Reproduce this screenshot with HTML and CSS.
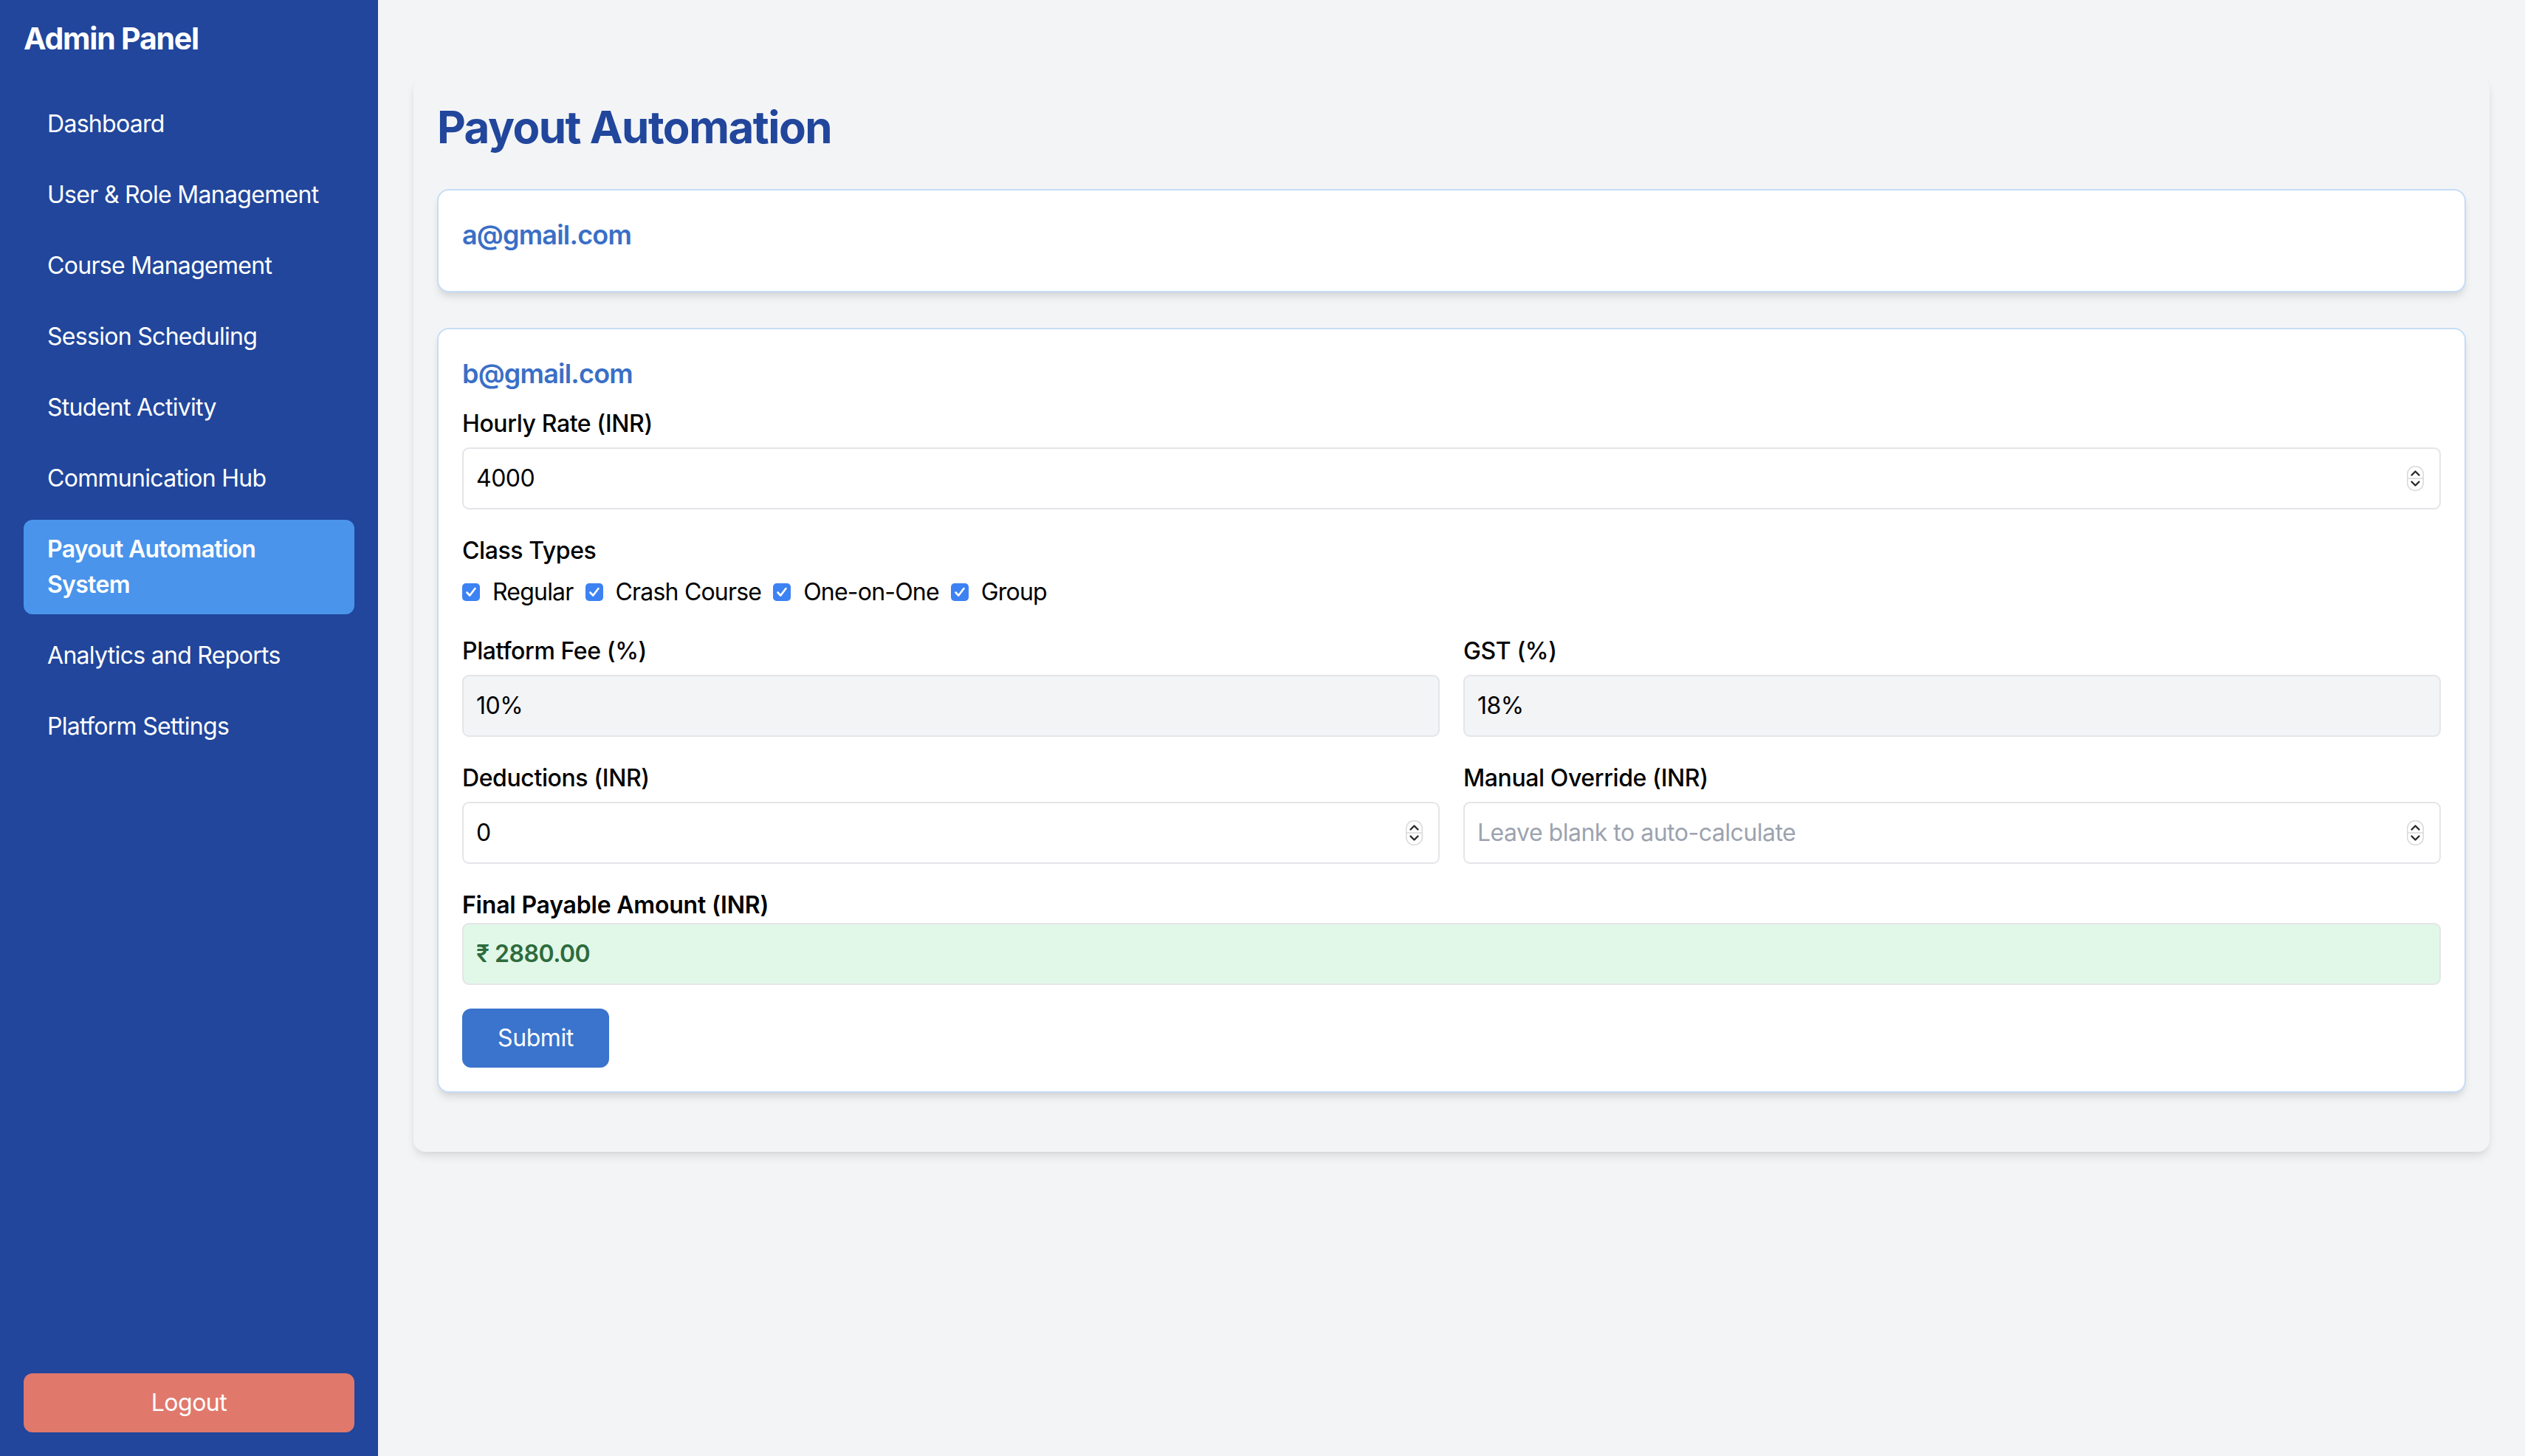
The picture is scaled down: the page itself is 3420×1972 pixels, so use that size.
FILE: index.html
```html
<!DOCTYPE html>
<html lang="en">
<head>
<meta charset="utf-8">
<title>Payout Automation</title>
<link rel="stylesheet" href="styles.css">
</head>
<body>
<div class="layout">
  <aside class="sidebar">
    <div class="brand">Admin Panel</div>
    <nav class="nav">
      <a class="nav-item">Dashboard</a>
      <a class="nav-item">User &amp; Role Management</a>
      <a class="nav-item">Course Management</a>
      <a class="nav-item">Session Scheduling</a>
      <a class="nav-item">Student Activity</a>
      <a class="nav-item">Communication Hub</a>
      <a class="nav-item active">Payout Automation System</a>
      <a class="nav-item">Analytics and Reports</a>
      <a class="nav-item">Platform Settings</a>
    </nav>
    <button class="logout">Logout</button>
  </aside>

  <main class="main">
    <section class="panel">
      <h1 class="page-title">Payout Automation</h1>

      <div class="card">
        <h2 class="card-email">a@gmail.com</h2>
      </div>

      <div class="card">
        <h2 class="card-email">b@gmail.com</h2>

        <div class="field">
          <div class="label">Hourly Rate (INR)</div>
          <div class="input">
            <span>4000</span>
            <svg class="spin" width="23" height="34" viewBox="0 0 23 34"><rect x="0.75" y="0.75" width="21.5" height="32.5" rx="10" fill="#fff" stroke="#d9d9dc" stroke-width="1.5"/><line x1="1" y1="17" x2="22" y2="17" stroke="#d9d9dc" stroke-width="1.5"/><path d="M6.5 12.5 L11.5 7.5 L16.5 12.5" fill="none" stroke="#2b2b2b" stroke-width="2.4" stroke-linecap="round" stroke-linejoin="round"/><path d="M6.5 21.5 L11.5 26.5 L16.5 21.5" fill="none" stroke="#2b2b2b" stroke-width="2.4" stroke-linecap="round" stroke-linejoin="round"/></svg>
          </div>
        </div>

        <div class="field">
          <div class="label">Class Types</div>
          <div class="checks">
            <label class="check"><svg class="box" width="24" height="24" viewBox="0 0 24 24"><rect x="0" y="0" width="24" height="24" rx="5" fill="#3d82f2"/><path d="M6.5 12.5 L10.3 16.5 L17.5 7" fill="none" stroke="#fff" stroke-width="2.6" stroke-linecap="round" stroke-linejoin="round"/></svg>Regular</label>
            <label class="check"><svg class="box" width="24" height="24" viewBox="0 0 24 24"><rect x="0" y="0" width="24" height="24" rx="5" fill="#3d82f2"/><path d="M6.5 12.5 L10.3 16.5 L17.5 7" fill="none" stroke="#fff" stroke-width="2.6" stroke-linecap="round" stroke-linejoin="round"/></svg>Crash Course</label>
            <label class="check"><svg class="box" width="24" height="24" viewBox="0 0 24 24"><rect x="0" y="0" width="24" height="24" rx="5" fill="#3d82f2"/><path d="M6.5 12.5 L10.3 16.5 L17.5 7" fill="none" stroke="#fff" stroke-width="2.6" stroke-linecap="round" stroke-linejoin="round"/></svg>One-on-One</label>
            <label class="check"><svg class="box" width="24" height="24" viewBox="0 0 24 24"><rect x="0" y="0" width="24" height="24" rx="5" fill="#3d82f2"/><path d="M6.5 12.5 L10.3 16.5 L17.5 7" fill="none" stroke="#fff" stroke-width="2.6" stroke-linecap="round" stroke-linejoin="round"/></svg>Group</label>
          </div>
        </div>

        <div class="grid">
          <div class="field">
            <div class="label">Platform Fee (%)</div>
            <div class="input readonly"><span>10%</span></div>
          </div>
          <div class="field">
            <div class="label">GST (%)</div>
            <div class="input readonly"><span>18%</span></div>
          </div>
          <div class="field">
            <div class="label">Deductions (INR)</div>
            <div class="input">
              <span>0</span>
              <svg class="spin" width="23" height="34" viewBox="0 0 23 34"><rect x="0.75" y="0.75" width="21.5" height="32.5" rx="10" fill="#fff" stroke="#d9d9dc" stroke-width="1.5"/><line x1="1" y1="17" x2="22" y2="17" stroke="#d9d9dc" stroke-width="1.5"/><path d="M6.5 12.5 L11.5 7.5 L16.5 12.5" fill="none" stroke="#2b2b2b" stroke-width="2.4" stroke-linecap="round" stroke-linejoin="round"/><path d="M6.5 21.5 L11.5 26.5 L16.5 21.5" fill="none" stroke="#2b2b2b" stroke-width="2.4" stroke-linecap="round" stroke-linejoin="round"/></svg>
            </div>
          </div>
          <div class="field">
            <div class="label">Manual Override (INR)</div>
            <div class="input">
              <span class="placeholder">Leave blank to auto-calculate</span>
              <svg class="spin" width="23" height="34" viewBox="0 0 23 34"><rect x="0.75" y="0.75" width="21.5" height="32.5" rx="10" fill="#fff" stroke="#d9d9dc" stroke-width="1.5"/><line x1="1" y1="17" x2="22" y2="17" stroke="#d9d9dc" stroke-width="1.5"/><path d="M6.5 12.5 L11.5 7.5 L16.5 12.5" fill="none" stroke="#2b2b2b" stroke-width="2.4" stroke-linecap="round" stroke-linejoin="round"/><path d="M6.5 21.5 L11.5 26.5 L16.5 21.5" fill="none" stroke="#2b2b2b" stroke-width="2.4" stroke-linecap="round" stroke-linejoin="round"/></svg>
            </div>
          </div>
        </div>

        <div class="final">
          <div class="label strong">Final Payable Amount (INR)</div>
          <div class="input total"><span>₹ 2880.00</span></div>
        </div>

        <button class="submit">Submit</button>
      </div>
    </section>
  </main>
</div>
</body>
</html>
```

FILE: styles.css
```css
* { box-sizing: border-box; }

html, body {
  margin: 0;
  padding: 0;
}

body {
  font-family: Inter, "Noto Sans", "Liberation Sans", sans-serif;
  background: #f3f4f6;
  color: #000;
}

.layout {
  display: flex;
  min-height: 100vh;
}

/* Sidebar */
.sidebar {
  width: 512px;
  flex-shrink: 0;
  background: #21469c;
  color: #fff;
  padding: 32px;
  display: flex;
  flex-direction: column;
  min-height: 100vh;
}

.brand {
  font-size: 41px;
  font-weight: 700;
  line-height: 40px;
  letter-spacing: -1.2px;
  margin-bottom: 56px;
}

.nav {
  display: flex;
  flex-direction: column;
  gap: 16px;
  flex: 1;
}

.nav-item {
  display: block;
  padding: 16px 32px;
  font-size: 32px;
  line-height: 48px;
  letter-spacing: -0.7px;
  border-radius: 12px;
  color: #fff;
}

.nav-item.active {
  background: #4a94eb;
  font-weight: 600;
}

.logout {
  display: block;
  width: 100%;
  border: none;
  border-radius: 12px;
  background: #e0786c;
  color: #fff;
  font-family: inherit;
  font-size: 32px;
  line-height: 48px;
  padding: 16px;
  letter-spacing: -0.5px;
}

/* Main */
.main {
  flex: 1;
  padding: 104px 48px 48px;
}

.panel {
  background: #f3f4f6;
  border-radius: 16px;
  padding: 32px;
  box-shadow: 0 8px 14px -2px rgba(0, 0, 0, 0.09), 0 3px 8px -3px rgba(0, 0, 0, 0.08);
}

.page-title {
  margin: 0 0 48px;
  font-size: 60px;
  line-height: 72px;
  font-weight: 700;
  letter-spacing: -1.5px;
  color: #21469c;
}

.card {
  background: #fff;
  border: 2px solid #c6ddf6;
  border-radius: 16px;
  padding: 32px;
  margin-bottom: 48px;
  box-shadow: 0 8px 12px -2px rgba(0, 0, 0, 0.1), 0 4px 8px -4px rgba(0, 0, 0, 0.08);
}

.card-email {
  margin: 0 0 16px;
  font-size: 36px;
  line-height: 56px;
  font-weight: 600;
  letter-spacing: -0.8px;
  color: #3a6fc6;
}

.field {
  margin-bottom: 32px;
}

.label {
  font-size: 32px;
  line-height: 48px;
  font-weight: 500;
  letter-spacing: -0.4px;
  margin-bottom: 8px;
  color: #000;
}

.label.strong {
  font-weight: 600;
  letter-spacing: -0.2px;
  margin-bottom: 0;
}

.input {
  display: flex;
  align-items: center;
  justify-content: space-between;
  height: 84px;
  padding: 16px 21px 16px 17px;
  border: 2px solid #e4e5e9;
  border-radius: 9px;
  background: #fff;
  font-size: 32px;
  line-height: 48px;
  letter-spacing: -0.5px;
  color: #000;
}

.input.readonly {
  background: #f3f4f6;
}

.placeholder {
  color: #9ca3af;
}

.spin {
  display: block;
  flex-shrink: 0;
}

.checks {
  display: flex;
  align-items: center;
  gap: 16px;
  height: 48px;
}

.check {
  display: inline-flex;
  align-items: center;
  gap: 17px;
  font-size: 32px;
  line-height: 48px;
  letter-spacing: -0.8px;
}

.box {
  display: block;
  flex-shrink: 0;
}

.grid {
  display: grid;
  grid-template-columns: 1fr 1fr;
  column-gap: 32px;
}

.final {
  margin-bottom: 32px;
}

.input.total {
  background: #e1f8e8;
  color: #2e6b3d;
  font-weight: 600;
}

.submit {
  display: block;
  border: none;
  border-radius: 12px;
  background: #3a74cd;
  color: #fff;
  font-family: inherit;
  font-size: 32px;
  line-height: 48px;
  letter-spacing: -0.4px;
  padding: 16px 48px;
}
```
